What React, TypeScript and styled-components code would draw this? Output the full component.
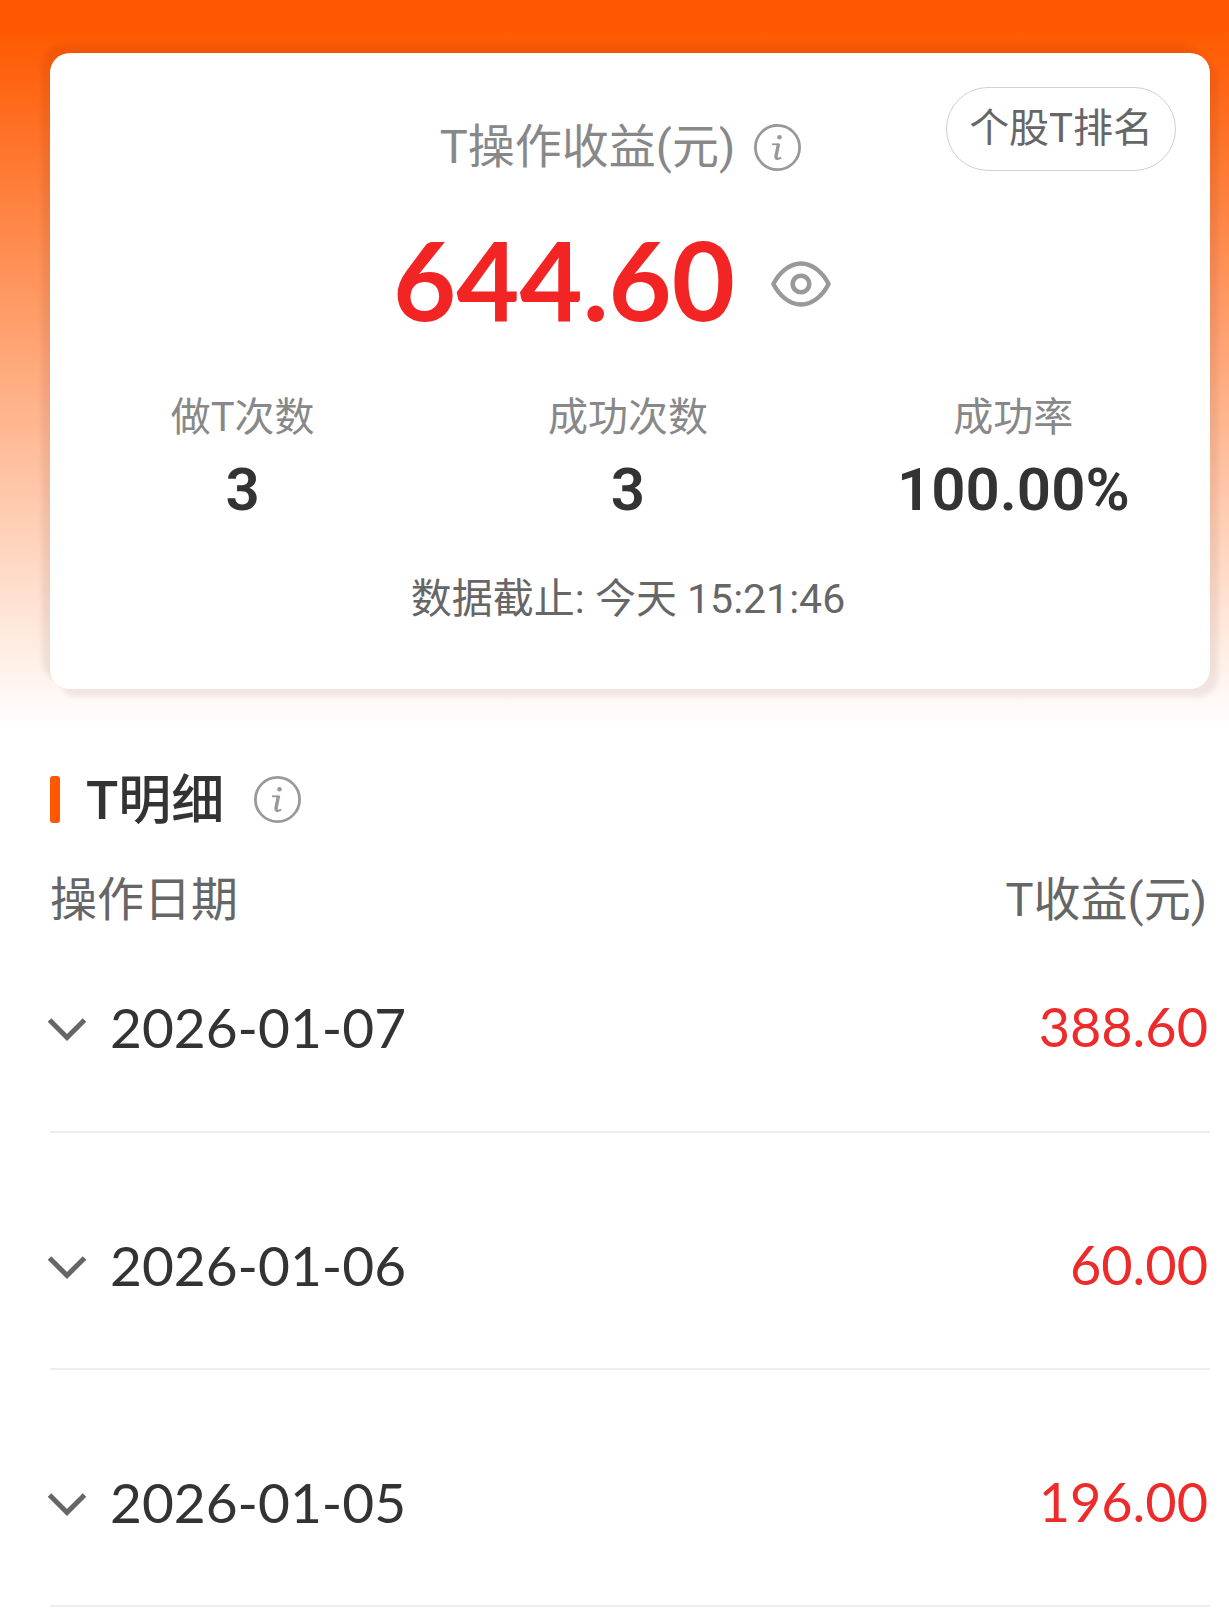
import React, { useState } from "react";
import styled, { createGlobalStyle } from "styled-components";

const textFont = `Roboto, "Noto Sans CJK SC", sans-serif`;
const numberFont = `Lato, Roboto, "Noto Sans CJK SC", sans-serif`;

const GlobalStyle = createGlobalStyle`
  *, *::before, *::after { box-sizing: border-box; }
  body {
    margin: 0;
    background: #fff;
    color: #333;
    font-family: ${textFont};
  }
`;

const Page = styled.main`
  min-height: 100vh;
  padding: 53px 19px 0 50px;
  background: linear-gradient(to bottom, #ff5800 28px, #fff 725px) no-repeat;
`;

const Card = styled.section`
  padding: 34px 0 60px;
  border-radius: 20px;
  background: #fff;
  box-shadow: 8px 8px 5px rgba(60, 0, 0, 0.07), -8px -8px 5px rgba(60, 0, 0, 0.07);
`;

const CardTop = styled.div`
  display: grid;
  grid-template-columns: 1fr auto 1fr;
  align-items: start;
  padding: 0 34px;
`;

const CardTitle = styled.div`
  display: flex;
  grid-column: 2;
  align-items: center;
  padding-top: 30px;
  color: #888;
`;

const TitleText = styled.h1`
  margin: 0;
  font-size: 47px;
  font-weight: 400;
  line-height: 60px;
`;

const IconButton = styled.button<{ $gap: number }>`
  display: flex;
  flex: none;
  margin: 0 ${(p) => p.$gap}px;
  padding: 0;
  border: 0;
  background: none;
  color: #999;
  cursor: pointer;
`;

const RankButton = styled.button`
  justify-self: end;
  height: 84px;
  padding: 0 22px;
  border: 1px solid #d0d0d0;
  border-radius: 42px;
  background: #fff;
  color: #666;
  font-family: inherit;
  font-size: 40px;
  line-height: 60px;
  cursor: pointer;
`;

const AmountRow = styled.div`
  display: flex;
  align-items: center;
  justify-content: center;
  padding-top: 39px;
`;

const Amount = styled.output`
  padding-bottom: 10px;
  color: #f32424;
  font-family: ${numberFont};
  font-size: 109px;
  font-weight: 700;
  line-height: 126px;
`;

const Stats = styled.dl`
  display: grid;
  grid-template-columns: repeat(3, 1fr);
  margin: 0;
  padding: 36px 4px 0 0;
`;

const Stat = styled.div`
  text-align: center;
`;

const StatLabel = styled.dt`
  color: #888;
  font-size: 40px;
  line-height: 60px;
`;

const StatValue = styled.dd`
  margin: 0;
  padding-top: 2px;
  font-size: 60px;
  font-weight: 600;
  line-height: 80px;
`;

const Deadline = styled.p`
  margin: 0;
  padding: 39px 4px 0 0;
  color: #666;
  font-size: 41px;
  line-height: 60px;
  text-align: center;
`;

const SectionHead = styled.header`
  display: flex;
  align-items: center;
  padding-top: 76px;
`;

const Marker = styled.span`
  width: 10px;
  height: 47px;
  margin-right: 26px;
  border-radius: 3px;
  background: #ff5800;
`;

const SectionTitle = styled.h2`
  margin: 0;
  padding-top: 4px;
  font-size: 53px;
  font-weight: 500;
  line-height: 64px;
`;

const Table = styled.table`
  width: 100%;
  border-collapse: collapse;
`;

const HeadCell = styled.th<{ $align: "left" | "right" }>`
  height: 90px;
  padding: 44px 3px 0 0;
  color: #666;
  font-size: 47px;
  font-weight: 400;
  line-height: 46px;
  text-align: ${(p) => p.$align};
`;

const Row = styled.tr`
  border-bottom: 2px solid #eee;

  & > td {
    height: 209px;
    padding: 0 2px 0 0;
  }

  & + & > td {
    height: 237px;
    padding-top: 28px;
  }
`;

const DateToggle = styled.button`
  display: flex;
  align-items: center;
  gap: 24px;
  padding: 0;
  border: 0;
  background: none;
  color: #333;
  font-family: ${numberFont};
  font-size: 55px;
  line-height: 72px;
  cursor: pointer;
`;

const Gain = styled.td`
  color: #ee2b2b;
  font-family: ${numberFont};
  font-size: 54px;
  line-height: 72px;
  text-align: right;
`;

const Chevron = styled.svg<{ $open: boolean }>`
  overflow: visible;
  color: #666;
  transform: ${(p) => (p.$open ? "rotate(180deg)" : "none")};
`;

function InfoIcon() {
  return (
    <svg width="47" height="47" viewBox="0 0 47 47" fill="none" stroke="currentColor" aria-hidden="true">
      <circle cx="23.5" cy="23.5" r="22.1" strokeWidth="2.8" />
      <circle cx="25.5" cy="13.3" r="2.3" fill="currentColor" stroke="none" />
      <path d="M18 20.3h5.800" strokeWidth="1.800" />
      <path d="M24.600 19.500L22.100 31.500Q21.500 34.600 24 34.200" strokeWidth="3.400" />
      <path d="M22.500 34.600Q25 35 27.200 33.600" strokeWidth="2" />
    </svg>
  );
}

function EyeIcon() {
  return (
    <svg width="60" height="46" viewBox="0 0 60 46" fill="none" stroke="currentColor" aria-hidden="true">
      <path
        d="M2.4 23C8 12 18 2.5 30 2.5S52 12 57.6 23C52 34 42 43.5 30 43.5S8 34 2.4 23Z"
        strokeWidth="4.4"
        strokeLinejoin="round"
      />
      <circle cx="30" cy="23" r="8.3" strokeWidth="4.6" />
    </svg>
  );
}

const stats = [
  { label: "做T次数", value: "3" },
  { label: "成功次数", value: "3" },
  { label: "成功率", value: "100.00%" },
];

const records = [
  { date: "2026-01-07", gain: "388.60" },
  { date: "2026-01-06", gain: "60.00" },
  { date: "2026-01-05", gain: "196.00" },
];

function RecordRow({ date, gain }: { date: string; gain: string }) {
  const [open, setOpen] = useState(false);
  return (
    <Row>
      <td>
        <DateToggle type="button" aria-expanded={open} onClick={() => setOpen(!open)}>
          <Chevron $open={open} width="36" height="26" viewBox="2 0 36 26" fill="none" aria-hidden="true">
            <path d="M1.5 6L19 23.5L36.5 6" stroke="currentColor" strokeWidth="5" />
          </Chevron>
          {date}
        </DateToggle>
      </td>
      <Gain>{gain}</Gain>
    </Row>
  );
}

export default function App() {
  return (
    <>
      <GlobalStyle />
      <Page>
        <Card>
          <CardTop>
            <CardTitle>
              <TitleText>T操作收益(元)</TitleText>
              <IconButton $gap={19} type="button" aria-label="收益说明">
                <InfoIcon />
              </IconButton>
            </CardTitle>
            <RankButton type="button">个股T排名</RankButton>
          </CardTop>
          <AmountRow>
            <Amount>644.60</Amount>
            <IconButton $gap={36} type="button" aria-label="隐藏金额">
              <EyeIcon />
            </IconButton>
          </AmountRow>
          <Stats>
            {stats.map((s) => (
              <Stat key={s.label}>
                <StatLabel>{s.label}</StatLabel>
                <StatValue>{s.value}</StatValue>
              </Stat>
            ))}
          </Stats>
          <Deadline>数据截止: 今天 15:21:46</Deadline>
        </Card>
        <SectionHead>
          <Marker />
          <SectionTitle>T明细</SectionTitle>
          <IconButton $gap={30} type="button" aria-label="明细说明">
            <InfoIcon />
          </IconButton>
        </SectionHead>
        <Table>
          <thead>
            <tr>
              <HeadCell $align="left" scope="col">操作日期</HeadCell>
              <HeadCell $align="right" scope="col">T收益(元)</HeadCell>
            </tr>
          </thead>
          <tbody>
            {records.map((r) => (
              <RecordRow key={r.date} {...r} />
            ))}
          </tbody>
        </Table>
      </Page>
    </>
  );
}
